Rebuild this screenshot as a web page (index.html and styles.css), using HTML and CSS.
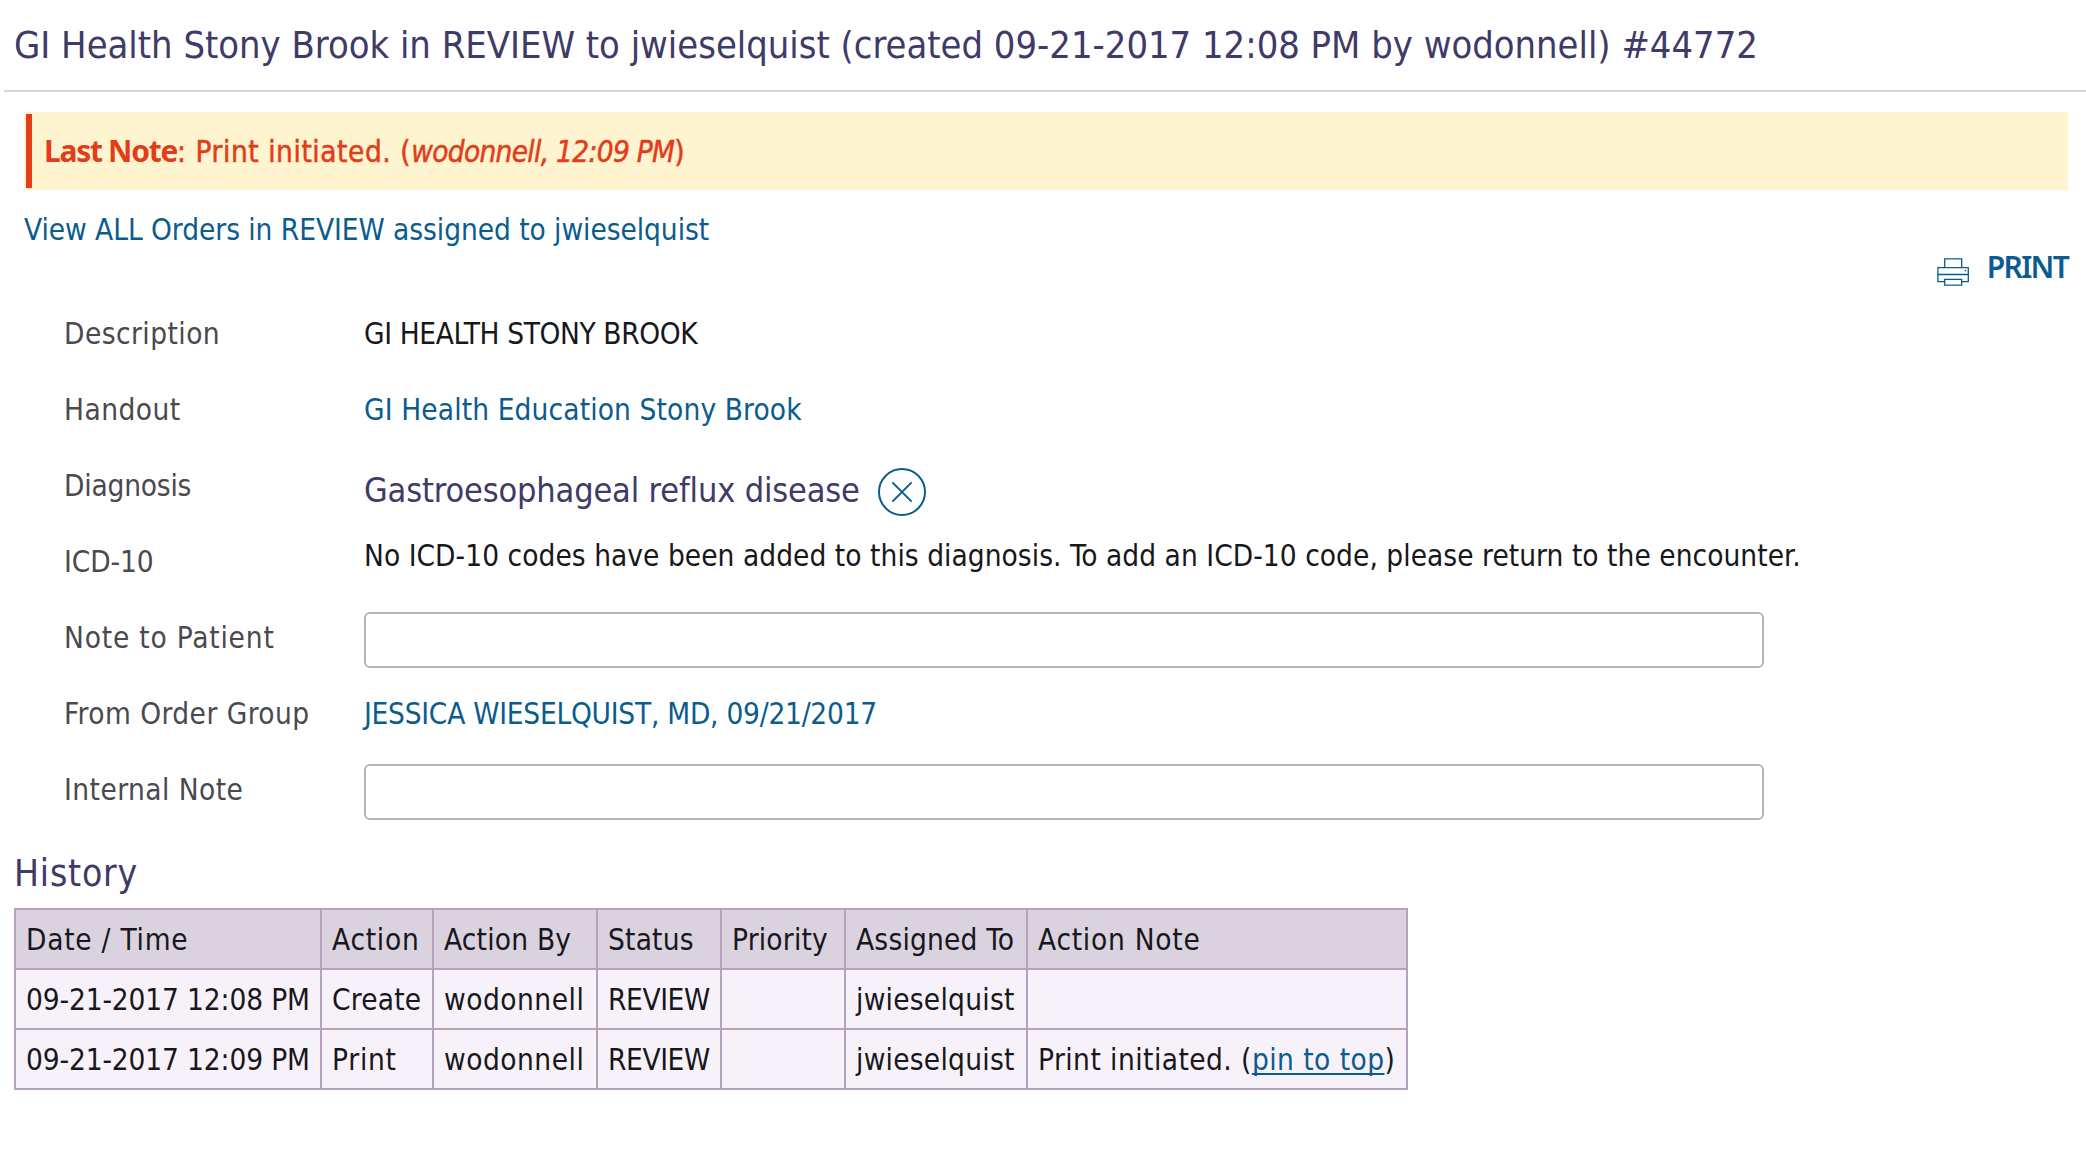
FILE: index.html
```
<!DOCTYPE html>
<html lang="en">
<head>
<meta charset="utf-8">
<title>Order #44772</title>
<link rel="stylesheet" href="styles.css">
</head>
<body>
<header class="page-header">
  <h1 class="page-title">GI Health Stony Brook in REVIEW to jwieselquist (created 09-21-2017 12:08 PM by wodonnell) #44772</h1>
</header>
<main>
  <div class="last-note"><span class="note-bar"></span><p class="note-text"><strong class="note-label">Last Note</strong>: Print initiated. (<em class="note-meta">wodonnell, 12:09 PM</em>)</p></div>
  <div class="view-all"><a class="link" href="#">View ALL Orders in REVIEW assigned to jwieselquist</a></div>
  <div class="toolbar">
    <a class="print" href="#">
      <svg class="print-icon" width="32" height="28" viewBox="0 0 32 28" fill="none" stroke="currentColor" stroke-width="1.3">
        <path d="M7.7 9.5V.9h17v8.6M7.5 23.6H.9V9.6h30.4v14h-6.5M.9 16.5h30.4M7.7 21.3h17v5.8h-17z"/>
        <circle cx="28.4" cy="12.6" r=".6" fill="currentColor" stroke-width=".6"/>
      </svg>
      <span class="print-label">PRINT</span>
    </a>
  </div>
  <dl class="details">
    <dt>Description</dt><dd class="caps">GI HEALTH STONY BROOK</dd>
    <dt>Handout</dt><dd class="handout"><a class="link" href="#">GI Health Education Stony Brook</a></dd>
    <dt class="tight">Diagnosis</dt>
    <dd class="diagnosis"><span>Gastroesophageal reflux disease</span>
      <button class="remove" aria-label="Remove diagnosis"><svg width="48" height="48" viewBox="0 0 48 48" fill="none" stroke="currentColor" stroke-width="2"><circle cx="24" cy="24" r="23"/><path d="M14.4 14.4l19.2 19.2M33.6 14.4L14.4 33.6"/></svg></button></dd>
    <dt class="code">ICD-10</dt><dd class="icd">No ICD-10 codes have been added to this diagnosis. To add an ICD-10 code, please return to the encounter.</dd>
    <dt class="loose">Note to Patient</dt><dd class="field"><input class="text-input" type="text" aria-label="Note to Patient"></dd>
    <dt>From Order Group</dt><dd class="group"><a class="link" href="#">JESSICA WIESELQUIST, MD, 09/21/2017</a></dd>
    <dt>Internal Note</dt><dd class="field"><input class="text-input" type="text" aria-label="Internal Note"></dd>
  </dl>
  <h2 class="history-title">History</h2>
  <table class="history">
    <colgroup><col class="c-date"><col class="c-action"><col class="c-by"><col class="c-status"><col class="c-priority"><col class="c-assigned"><col class="c-note"></colgroup>
    <thead><tr><th class="loose">Date / Time</th><th class="loose">Action</th><th>Action By</th><th>Status</th><th>Priority</th><th>Assigned To</th><th class="loose">Action Note</th></tr></thead>
    <tbody>
      <tr><td class="date">09-21-2017 12:08 PM</td><td>Create</td><td class="owner">wodonnell</td><td class="status">REVIEW</td><td></td><td class="assignee">jwieselquist</td><td></td></tr>
      <tr><td class="date">09-21-2017 12:09 PM</td><td class="loose">Print</td><td class="owner">wodonnell</td><td class="status">REVIEW</td><td></td><td class="assignee">jwieselquist</td><td class="action-note">Print initiated. (<a class="pin" href="#">pin to top</a>)</td></tr>
    </tbody>
  </table>
</main>
</body>
</html>
```
FILE: styles.css
```
* { box-sizing: border-box; }
body {
  margin: 0;
  background: #fff;
  color: #17171c;
  font: 29.5px/40px "DejaVu Sans Condensed", "DejaVu Sans", sans-serif;
  font-stretch: condensed;
  white-space: nowrap;
}
.page-header {
  height: 92px;
  margin-left: 4px;
  padding-left: 10px;
  border-bottom: 2px solid #d8d8d8;
}
.page-title, .history-title { margin: 0; color: #403a68; font-weight: 400; }
.page-title { font-size: 37.75px; line-height: 90px; }
.link { color: #0b5c8e; text-decoration: none; }

.last-note {
  display: flex;
  align-items: center;
  height: 78px;
  margin: 20px 18px 0 24px;
  padding-left: 2px;
  background: #fef4d0;
  color: #e43c18;
}
.note-bar { width: 6px; height: 74px; background: #e43c18; }
.note-text { margin: 0 0 0 12px; -webkit-text-stroke: 0.5px; letter-spacing: 0.55px; }
.note-label { font: 700 30px/40px "Noto Sans", sans-serif; letter-spacing: -1.3px; -webkit-text-stroke: 0; }
.note-meta { letter-spacing: -0.7px; }

.view-all { padding: 20px 0 0 24px; letter-spacing: -0.05px; }
.toolbar { display: flex; justify-content: flex-end; height: 46px; padding-right: 18px; }
.print {
  display: flex;
  gap: 18px;
  color: #0b5c8e;
  font: 600 30px/36px "Noto Sans", sans-serif;
  letter-spacing: -1.7px;
  text-decoration: none;
}
.print-icon { margin-top: 8px; }
.print-label { margin-top: -1px; }

.details {
  display: grid;
  grid-template-columns: 300px 1fr;
  grid-auto-rows: 76px;
  align-items: center;
  margin: 0;
  padding-left: 64px;
}
.details dt { color: #4a494f; letter-spacing: 0.45px; }
.details .tight { letter-spacing: -0.2px; }
.details .loose { letter-spacing: 0.8px; }
.details .code { letter-spacing: -0.1px; }
.details dd { margin: 0; }
.details .caps { letter-spacing: -0.38px; }
.details .handout { letter-spacing: 0.13px; }
.details .group { letter-spacing: -0.25px; }
.details .icd { padding-bottom: 12px; letter-spacing: 0.05px; }
.details .field { padding-top: 4px; }
.diagnosis { display: flex; align-items: center; gap: 18px; padding-top: 10px; color: #403a68; font-size: 34px; line-height: 42px; letter-spacing: -0.15px; }
.diagnosis span { margin-top: -2px; }
.remove { display: flex; padding: 0; border: 0; margin-top: 2px; background: none; color: #0b5c8e; }
.text-input {
  display: block;
  width: 1400px;
  height: 56px;
  padding: 0 12px;
  border: 2px solid #b4b4ba;
  border-radius: 6px;
  background: #fff;
  font: inherit;
}

.history-title { height: 80px; padding: 11px 0 0 14px; font-size: 37px; line-height: 70px; letter-spacing: 0.8px; }
.history { width: 1394px; margin-left: 14px; border-collapse: collapse; table-layout: fixed; }
.history tr { height: 60px; }
.history th, .history td { padding: 1px 0 0 10px; border: 2px solid #b5a2be; font-weight: 400; text-align: left; }
.history th { background: #dad2de; letter-spacing: 0.2px; }
.history td { background: #f7f2fa; letter-spacing: 0.2px; }
.history .loose { letter-spacing: 0.75px; }
.history .date { letter-spacing: -0.14px; }
.history .owner { letter-spacing: 0.5px; }
.history .assignee { letter-spacing: 0.25px; }
.history .status { letter-spacing: -0.4px; }
.history .action-note { letter-spacing: 0.45px; }
.c-date { width: 306px; }
.c-action { width: 112px; }
.c-by { width: 164px; }
.c-status, .c-priority { width: 124px; }
.c-assigned { width: 182px; }
.c-note { width: 380px; }
.pin { color: #0b5c8e; text-decoration-thickness: 2px; text-underline-offset: 3px; text-decoration-skip-ink: none; }
```
